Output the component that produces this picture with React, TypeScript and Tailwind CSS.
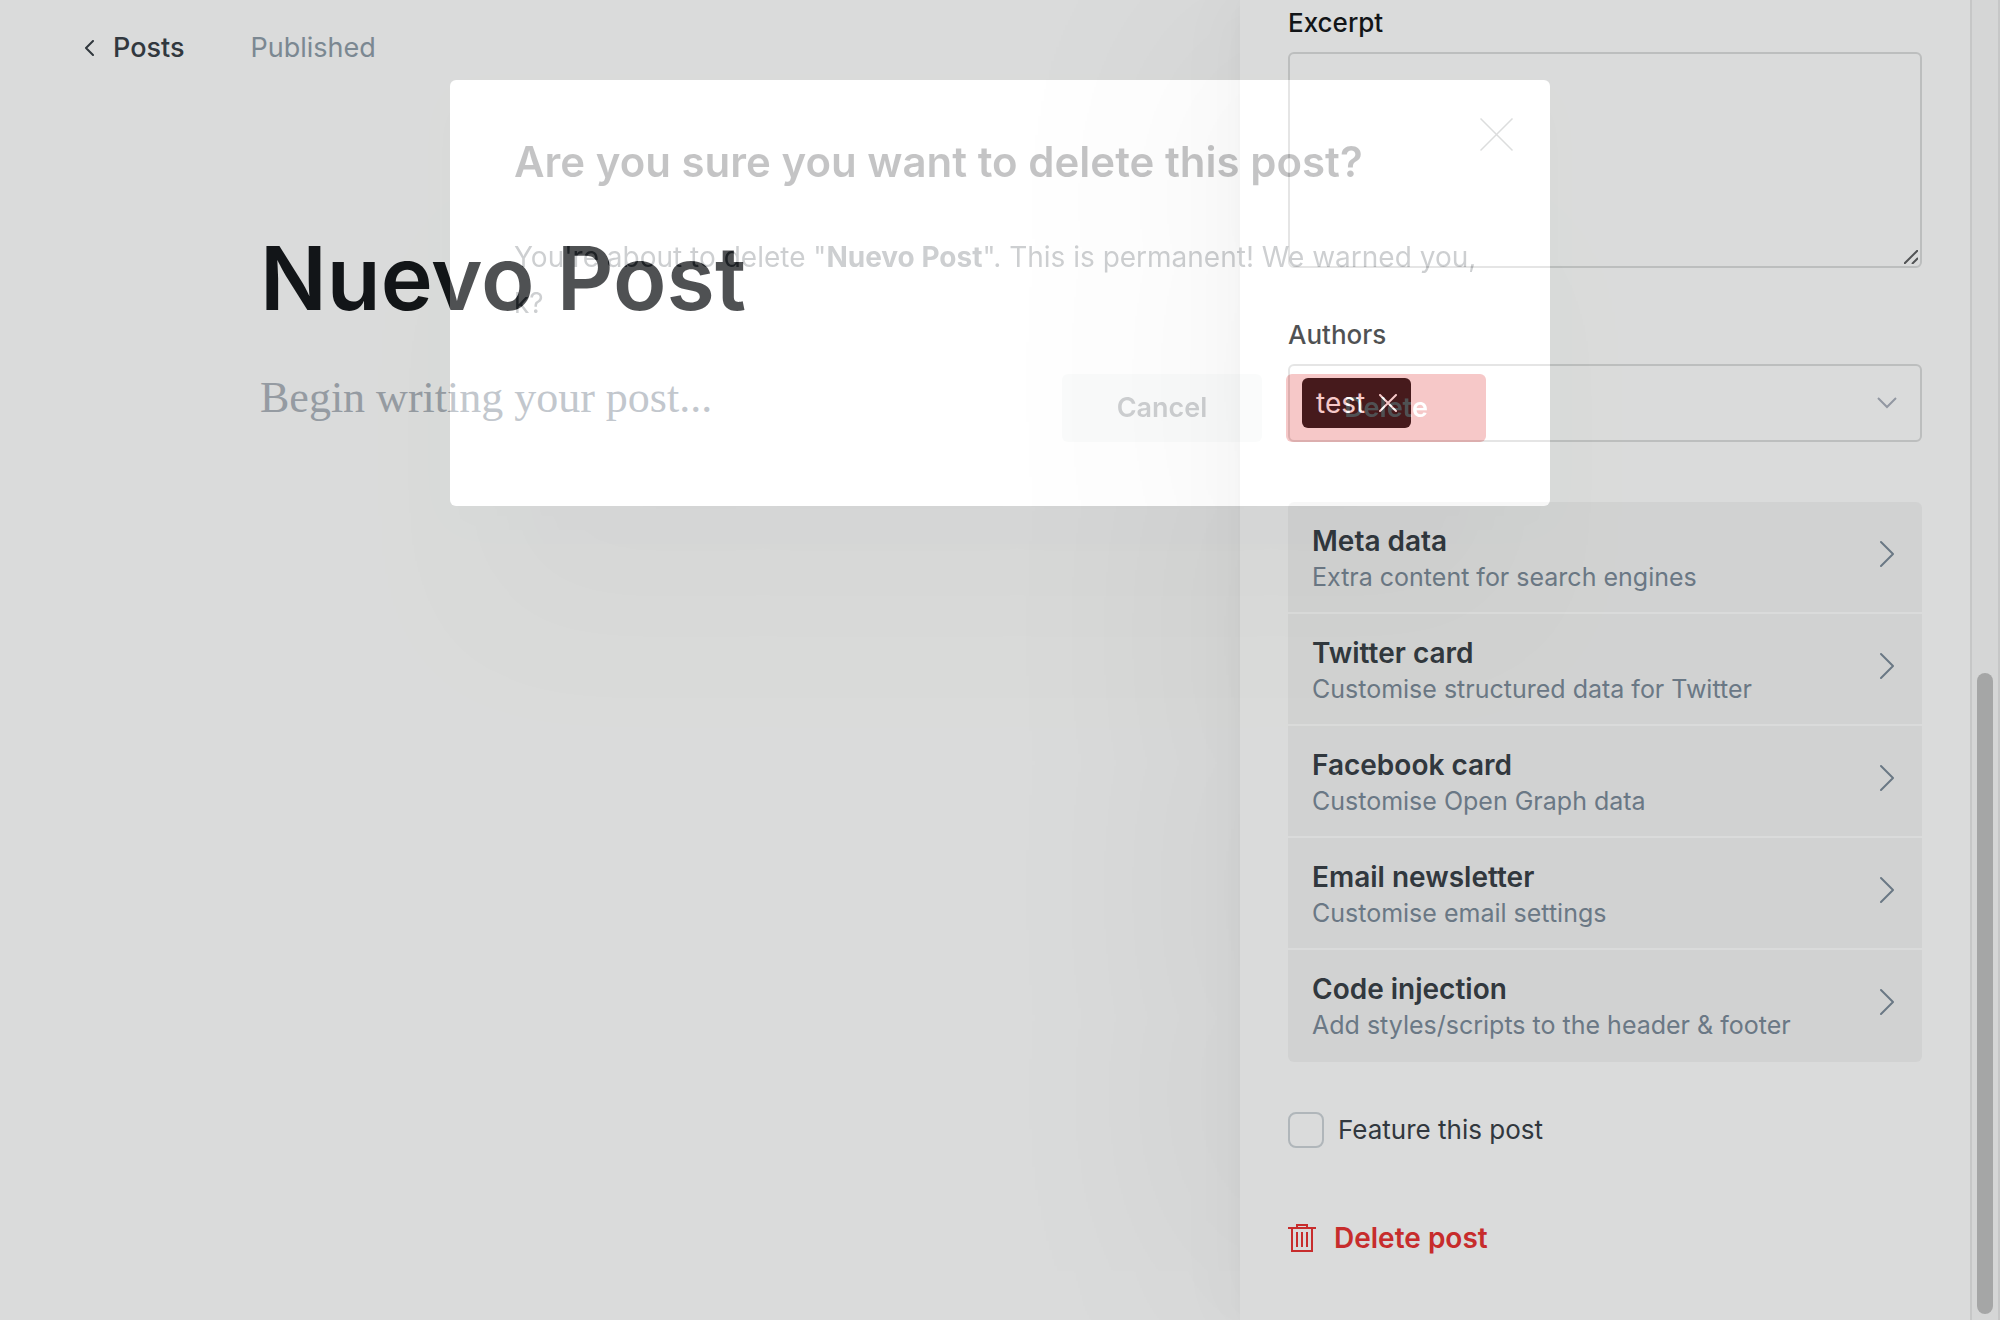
import React from "react";

const settings = [
  { title: "Meta data", text: "Extra content for search engines" },
  { title: "Twitter card", text: "Customise structured data for Twitter" },
  { title: "Facebook card", text: "Customise Open Graph data" },
  { title: "Email newsletter", text: "Customise email settings" },
  { title: "Code injection", text: "Add styles/scripts to the header & footer" },
];

function TrashIcon() {
  return (
    <svg width="28" height="28" viewBox="0 0 28 28" fill="none" stroke="currentColor" strokeWidth="2" aria-hidden="true">
      <path d="M0 4H28M9 4V1H19V4M4 4V27H24V4M9 8V23M14 8V23M19 8V23" />
    </svg>
  );
}

function Header() {
  return (
    <header className="flex h-24 items-center gap-[66px] pl-[84px] text-[27px] leading-8">
      <a href="#posts" className="flex items-center gap-[19px] font-medium text-[#394047]">
        <svg width="10" height="16" viewBox="0 0 10 16" fill="none" stroke="currentColor" strokeWidth="2" strokeLinecap="round" strokeLinejoin="round" aria-hidden="true">
          <path d="M9 1L2 8l7 7" />
        </svg>
        Posts
      </a>
      <span className="text-[#909eaa]">Published</span>
    </header>
  );
}

function Editor() {
  return (
    <main className="min-w-0 flex-1">
      <Header />
      <div className="pl-[260px] pt-32">
        <h1 className="text-[88px] font-semibold leading-[108px] text-[#15171a]">Nuevo Post</h1>
        <p className="mt-[38px] font-['Georgia','Liberation_Serif',serif] text-[44px] leading-[56px] text-[#aeb4bc]">
          Begin writing your post...
        </p>
      </div>
    </main>
  );
}

function SettingsPanel() {
  return (
    <aside className="flex w-[760px] shrink-0 bg-white shadow-[0_0_14px_rgba(0,0,0,0.03),-12px_0_60px_rgba(0,0,0,0.03),-60px_0_240px_-20px_rgba(0,0,0,0.06)]">
      <div className="flex-1 px-12 pt-1.5">
        <label htmlFor="excerpt" className="block text-[26px] font-medium leading-[34px] text-[#15171a]">
          Excerpt
        </label>
        <div className="relative mt-3">
          <textarea id="excerpt" className="block h-[216px] w-full resize-none rounded-md border-2 border-[#dcdddd] bg-transparent p-4 text-[26px] outline-none" />
          <svg className="absolute bottom-1 right-1 text-[#5f6062]" width="14" height="14" viewBox="0 0 14 14" fill="none" stroke="currentColor" strokeWidth="2" aria-hidden="true">
            <path d="M0 14L14 0M8 14l6-6" />
          </svg>
        </div>

        <label htmlFor="authors" className="mt-[50px] block text-[26px] font-medium leading-[34px] text-[#15171a]">
          Authors
        </label>
        <div className="mt-3 flex h-[78px] items-center rounded-md border-2 border-[#dcdddd] pl-3 pr-[23px]">
          <span className="flex h-[50px] items-center gap-3.5 rounded-md bg-[#15171a] px-3.5 text-[28px] text-white">
            test
            <button type="button" aria-label="Remove test">
              <svg className="block" width="18" height="18" viewBox="0 0 18 18" fill="none" stroke="currentColor" strokeWidth="2" strokeLinecap="round" aria-hidden="true">
                <path d="M1 1l16 16M17 1L1 17" />
              </svg>
            </button>
          </span>
          <input id="authors" className="h-full min-w-0 flex-1 bg-transparent px-3 text-[26px] outline-none" />
          <svg width="20" height="12" viewBox="0 0 20 12" fill="none" stroke="#abb0bc" strokeWidth="2" aria-hidden="true">
            <path d="M1 1l9 9 9-9" />
          </svg>
        </div>

        <ul className="mt-[60px] overflow-hidden rounded-md">
          {settings.map((item) => (
            <li key={item.title} className="h-28 border-b-2 border-white bg-[#f5f5f5] last:border-b-0">
              <button type="button" className="flex h-full w-full items-start justify-between pl-6 pr-7 pt-[21px] text-left">
                <span className="flex flex-col">
                  <span className="text-[28px] font-semibold leading-9 text-[#394047]">{item.title}</span>
                  <span className="text-[25px] leading-9 text-[#7c8b9a]">{item.text}</span>
                </span>
                <svg className="mt-[17px]" width="14" height="28" viewBox="0 0 14 28" fill="none" stroke="#7c8b9a" strokeWidth="2" strokeLinecap="round" strokeLinejoin="round" aria-hidden="true">
                  <path d="M1 2l12 12L1 26" />
                </svg>
              </button>
            </li>
          ))}
        </ul>

        <label className="mt-[50px] flex items-center gap-3.5 text-[26px] leading-9 text-[#394047]">
          <input type="checkbox" className="size-9 appearance-none rounded-lg border-2 border-[#ced4d9]" />
          Feature this post
        </label>

        <button type="button" className="mb-16 mt-[72px] flex items-center gap-[18px] text-[28px] font-semibold leading-9 text-[#e93232]">
          <TrashIcon />
          Delete post
        </button>
      </div>
      <div className="flex w-[30px] shrink-0 flex-col items-center justify-end border-l-2 border-r-2 border-[#e8e8e8] bg-[#fafafa] pb-1.5" aria-hidden="true">
        <div className="h-[641px] w-4 rounded-full bg-[#c1c1c1]" />
      </div>
    </aside>
  );
}

function DeleteDialog() {
  return (
    <div className="fixed inset-0 flex items-start justify-center bg-[rgba(8,16,13,0.6)] pt-20 opacity-25">
      <div
        role="dialog"
        aria-labelledby="dialog-title"
        className="relative w-[1100px] rounded-md bg-white p-16 shadow-[0_16px_40px_-8px_rgba(0,0,0,0.05),0_150px_130px_-50px_rgba(0,0,0,0.16)]"
      >
        <button type="button" aria-label="Close" className="absolute right-9 top-[38px] text-[#74777a]">
          <svg className="block" width="34" height="34" viewBox="0 0 34 34" fill="none" stroke="currentColor" strokeWidth="1.5" aria-hidden="true">
            <path d="M0.5 0.5l32 32M32.5 0.5L0.5 32.5" />
          </svg>
        </button>
        <h2 id="dialog-title" className="text-[42px] font-semibold leading-9 text-[#15171a]">
          Are you sure you want to delete this post?
        </h2>
        <p className="mt-[54px] text-[28px] leading-[46px] text-[#394047]">
          You're about to delete "<strong className="font-bold">Nuevo Post</strong>". This is permanent! We warned you, k?
        </p>
        <div className="mt-12 flex justify-end gap-6 text-[27px] font-semibold">
          <button type="button" className="h-[68px] w-[200px] rounded-md bg-[#ebf0ee] text-[#394047]">
            Cancel
          </button>
          <button type="button" className="h-[68px] w-[200px] rounded-md bg-[#d92424] text-white">
            Delete
          </button>
        </div>
      </div>
    </div>
  );
}

export default function App() {
  return (
    <div className="flex min-h-screen overflow-hidden bg-white font-['Inter',sans-serif]">
      <Editor />
      <SettingsPanel />
      <DeleteDialog />
    </div>
  );
}
